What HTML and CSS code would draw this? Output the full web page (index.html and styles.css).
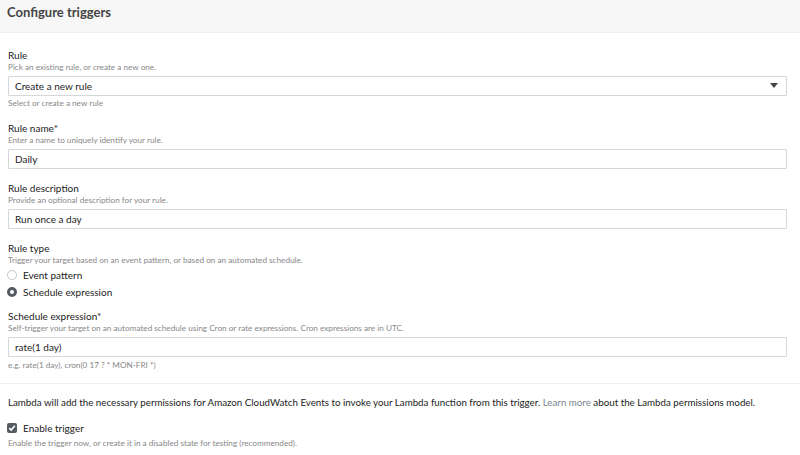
FILE: index.html
```html
<!DOCTYPE html>
<html lang="en">
<head>
<meta charset="utf-8">
<title>Configure triggers</title>
<link rel="stylesheet" href="styles.css">
</head>
<body>
<div class="header"><h1 class="title">Configure triggers</h1></div>
<div class="content">
  <div class="field">
    <div class="label">Rule</div>
    <div class="help">Pick an existing rule, or create a new one.</div>
    <div class="input select">
      <span>Create a new rule</span>
      <svg class="caret" width="8" height="6" viewBox="0 0 8 6"><path d="M0 0H8L4 5Z" fill="#444"/></svg>
    </div>
    <div class="hint">Select or create a new rule</div>
  </div>
  <div class="field">
    <div class="label">Rule name*</div>
    <div class="help">Enter a name to uniquely identify your rule.</div>
    <div class="input">Daily</div>
  </div>
  <div class="field">
    <div class="label">Rule description</div>
    <div class="help">Provide an optional description for your rule.</div>
    <div class="input">Run once a day</div>
  </div>
  <div class="field field-radio">
    <div class="label">Rule type</div>
    <div class="help">Trigger your target based on an event pattern, or based on an automated schedule.</div>
    <div class="option"><span class="radio"></span>Event pattern</div>
    <div class="option"><span class="radio checked"></span>Schedule expression</div>
  </div>
  <div class="field field-last">
    <div class="label">Schedule expression*</div>
    <div class="help">Self-trigger your target on an automated schedule using Cron or rate expressions. Cron expressions are in UTC.</div>
    <div class="input">rate(1 day)</div>
    <div class="hint">e.g. rate(1 day), cron(0 17 ? * MON-FRI *)</div>
  </div>
</div>
<div class="footer">
  <p class="note">Lambda will add the necessary permissions for Amazon CloudWatch Events to invoke your Lambda function from this trigger. <span class="link">Learn more</span> about the Lambda permissions model.</p>
  <div class="option check-row"><span class="checkbox"><svg width="8" height="8" viewBox="0 0 8 8"><path d="M1.2 4.2L3.2 6.1L6.8 1.8" fill="none" stroke="#fff" stroke-width="1.6"/></svg></span>Enable trigger</div>
  <div class="help">Enable the trigger now, or create it in a disabled state for testing (recommended).</div>
</div>
</body>
</html>
```
FILE: styles.css
```css
html, body {
  margin: 0;
  padding: 0;
  background: #fff;
}
body {
  font-family: Lato, "Liberation Sans", sans-serif;
  color: #16191f;
}
.header {
  background: #f7f7f7;
  height: 33px;
  border-bottom: 1px solid #eeeeee;
  box-sizing: border-box;
  padding-left: 7px;
  display: flex;
  align-items: center;
}
.title {
  margin: 0;
  font-size: 13px;
  font-weight: 700;
  color: #444;
  line-height: 16px;
  position: relative;
  top: -4px;
}
.content {
  padding: 15px 13px 0 8px;
}
.field {
  margin-bottom: 12px;
}
.field-radio {
  margin-bottom: 9px;
}
.field-last {
  margin-bottom: 0;
  padding-bottom: 12px;
}
.label {
  font-size: 10px;
  line-height: 14px;
  color: #1c1c1c;
}
.help {
  font-size: 8.2px;
  line-height: 11px;
  color: #888;
}
.hint {
  font-size: 8.2px;
  line-height: 11px;
  color: #888;
  margin-top: 2px;
}
.field-last .hint {
  margin-top: 3px;
}
.input {
  margin-top: 3px;
  height: 20px;
  box-sizing: border-box;
  border: 1px solid #d5d8d8;
  border-radius: 1px;
  padding: 0 6px;
  font-size: 10px;
  line-height: 18px;
  color: #1c1c1c;
}
.select {
  display: flex;
  justify-content: space-between;
  align-items: center;
}
.caret {
  margin-right: 2px;
}
.option {
  display: flex;
  align-items: center;
  height: 17px;
  font-size: 10px;
  color: #1c1c1c;
}
.radio {
  width: 10px;
  height: 10px;
  box-sizing: border-box;
  border-radius: 50%;
  border: 1px solid #c8c8c8;
  margin: 0 6px 0 -1px;
  background: #fff;
}
.radio.checked {
  border: 3px solid #555b62;
  background: #fff;
}
.footer {
  border-top: 1px solid #efefef;
  padding: 0 8px;
}
.note {
  margin: 12px 0 10px;
  font-size: 9.75px;
  line-height: 13px;
  color: #1c1c1c;
  white-space: nowrap;
}
.link {
  color: #7b8590;
}
.check-row {
  height: 17px;
}
.checkbox {
  width: 10px;
  height: 10px;
  border-radius: 2px;
  background: #555b62;
  margin: 0 6px 0 -1px;
  display: flex;
  align-items: center;
  justify-content: center;
}
.footer .help {
  margin-top: 2px;
}
```
